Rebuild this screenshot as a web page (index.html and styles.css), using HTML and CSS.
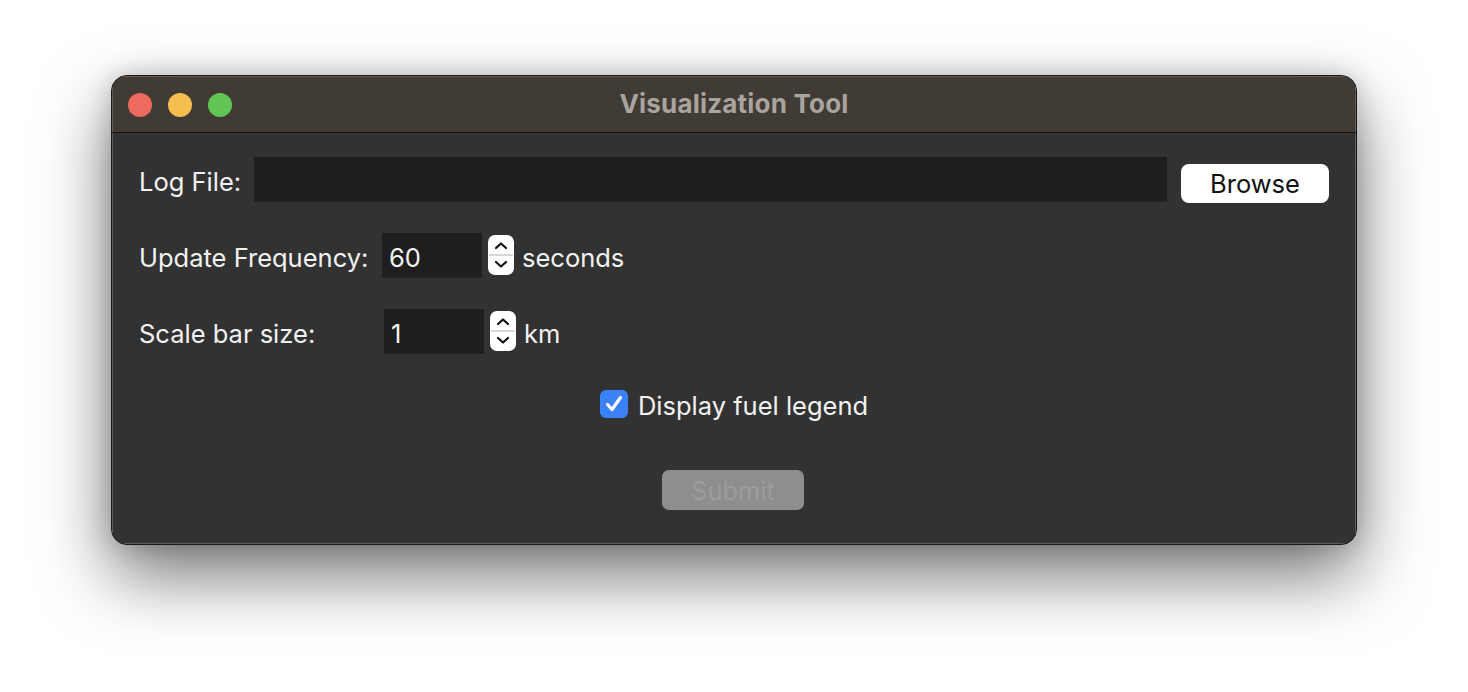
FILE: index.html
```html
<!DOCTYPE html>
<html>
<head>
<meta charset="utf-8">
<link rel="stylesheet" href="styles.css">
</head>
<body>
<div class="window">
  <div class="titlebar">
    <div class="lights">
      <span class="light red"></span>
      <span class="light yellow"></span>
      <span class="light green"></span>
    </div>
    <div class="title">Visualization Tool</div>
  </div>
  <div class="content">
    <div class="row row-log">
      <span class="label">Log File:</span>
      <div class="field field-wide"></div>
      <button class="browse">Browse</button>
    </div>
    <div class="row row-freq">
      <span class="label label-freq">Update Frequency:</span>
      <div class="field field-num"><span class="txt">60</span></div>
      <div class="spinner">
        <svg width="26" height="40" viewBox="0 0 26 40">
          <path d="M8 13 L13 8.5 L18 13" fill="none" stroke="#111" stroke-width="2.2" stroke-linecap="round" stroke-linejoin="round"/>
          <line x1="1" y1="20" x2="25" y2="20" stroke="#c8c8c8" stroke-width="1.5"/>
          <path d="M8 27 L13 31.5 L18 27" fill="none" stroke="#111" stroke-width="2.2" stroke-linecap="round" stroke-linejoin="round"/>
        </svg>
      </div>
      <span class="unit">seconds</span>
    </div>
    <div class="row row-scale">
      <span class="label label-scale">Scale bar size:</span>
      <div class="field field-num"><span class="txt">1</span></div>
      <div class="spinner">
        <svg width="26" height="40" viewBox="0 0 26 40">
          <path d="M8 13 L13 8.5 L18 13" fill="none" stroke="#111" stroke-width="2.2" stroke-linecap="round" stroke-linejoin="round"/>
          <line x1="1" y1="20" x2="25" y2="20" stroke="#c8c8c8" stroke-width="1.5"/>
          <path d="M8 27 L13 31.5 L18 27" fill="none" stroke="#111" stroke-width="2.2" stroke-linecap="round" stroke-linejoin="round"/>
        </svg>
      </div>
      <span class="unit">km</span>
    </div>
    <div class="row row-check">
      <span class="checkbox">
        <svg width="28" height="28" viewBox="0 0 28 28">
          <path d="M7.5 14.5 L12 19.5 L20.5 7.5" fill="none" stroke="#fff" stroke-width="3.2" stroke-linecap="round" stroke-linejoin="round"/>
        </svg>
      </span>
      <span class="check-label">Display fuel legend</span>
    </div>
    <div class="row row-submit">
      <button class="submit">Submit</button>
    </div>
  </div>
</div>
</body>
</html>
```

FILE: styles.css
```css
* { box-sizing: border-box; }
html, body {
  margin: 0;
  padding: 0;
  background: #ffffff;
  width: 1468px;
  height: 692px;
  overflow: hidden;
  font-family: "Inter", "Liberation Sans", sans-serif;
}
body {
  padding: 75px 0 0 111px;
}
.window {
  width: 1246px;
  height: 470px;
  border-radius: 16px;
  background: #323232;
  border: 1px solid #1a1a1a;
  box-shadow: 0 30px 70px rgba(0, 0, 0, 0.55), 0 0 24px rgba(0,0,0,0.18);
  overflow: hidden;
  display: flex;
  flex-direction: column;
}
.titlebar {
  height: 57px;
  flex: none;
  background: #413b35;
  border-bottom: 1px solid #141414;
  display: flex;
  align-items: center;
  position: relative;
  box-shadow: inset 1px 1px 0 #5e5a55, inset -1px 0 0 #5e5a55;
}
.lights {
  display: flex;
  gap: 16px;
  padding-left: 16px;
  padding-top: 2px;
}
.light {
  width: 24px;
  height: 24px;
  border-radius: 50%;
  display: block;
}
.red { background: #ed6a5e; }
.yellow { background: #f5be4f; }
.green { background: #61c554; }
.title {
  position: absolute;
  left: 0;
  right: 0;
  top: 12px;
  text-align: center;
  color: #aaa49e;
  font-weight: 700;
  font-size: 26px;
  letter-spacing: 0.2px;
}
.content {
  flex: 1;
  padding: 24px 27px 0 27px;
  color: #f2f2f2;
  font-size: 25.5px;
  box-shadow: inset 1px 0 0 #5e5e5e, inset -1px 0 0 #5e5e5e, inset 0 -1px 0 #5e5e5e;
}
.row {
  display: flex;
  align-items: center;
}
.label, .unit, .check-label, .txt {
  white-space: nowrap;
  padding-top: 5px;
}
.row-log { height: 44px; }
.row-log .label { width: 115px; }
.field {
  background: #1e1e1e;
  height: 44px;
  box-shadow: 0 1px 0 rgba(0,0,0,0.25);
}
.field-wide { flex: 1; }
.browse {
  margin-left: 14px;
  width: 148px;
  height: 39px;
  border: none;
  border-radius: 8px;
  background: #ffffff;
  color: #111;
  font-family: inherit;
  font-size: 25.5px;
  padding: 1px 0 0 0;
  margin-top: 8px;
}
.row-freq { margin-top: 32px; height: 44px; }
.label-freq { width: 243px; }
.field-num {
  width: 100px;
  padding-left: 7px;
  display: flex;
  align-items: center;
  color: #f5f5f5;
}
.spinner {
  margin-left: 6px;
  width: 26px;
  height: 40px;
  border-radius: 7px;
  background: #ffffff;
  display: flex;
}
.unit { margin-left: 8px; }
.row-scale { margin-top: 32px; height: 44px; }
.label-scale { width: 245px; }
.row-check {
  margin-top: 37px;
  height: 28px;
  justify-content: center;
  padding-right: 0px;
}
.checkbox {
  width: 28px;
  height: 28px;
  border-radius: 6px;
  background: #3a82f7;
  display: flex;
}
.check-label { margin-left: 10px; padding-top: 3px; }
.row-submit {
  margin-top: 52px;
  justify-content: center;
  padding-right: 2px;
}
.submit {
  width: 142px;
  height: 40px;
  border: none;
  border-radius: 7px;
  background: #8e8e8e;
  color: #9c9c9c;
  font-family: inherit;
  font-size: 25.5px;
  padding: 1px 0 0 0;
}
```
